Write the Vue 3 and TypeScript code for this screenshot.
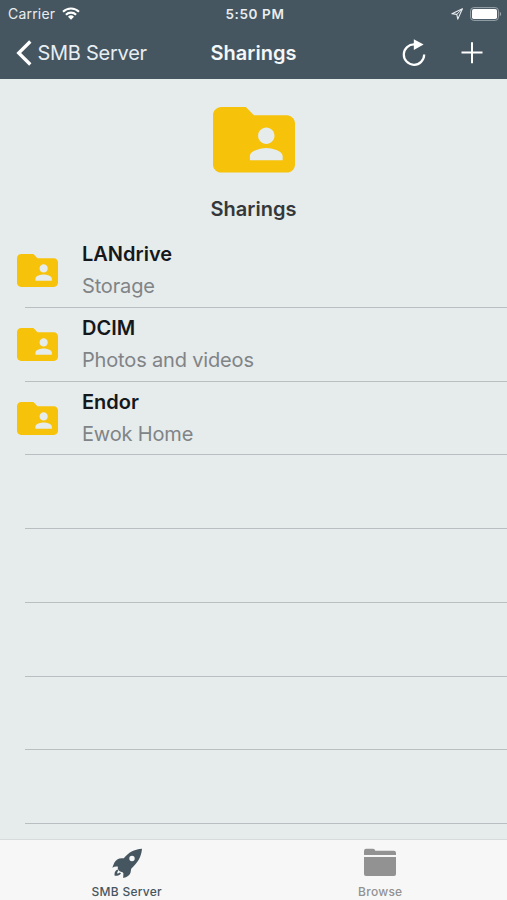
<script setup lang="ts">
interface Share {
  name: string
  detail: string
}

const shares: Share[] = [
  { name: 'LANdrive', detail: 'Storage' },
  { name: 'DCIM', detail: 'Photos and videos' },
  { name: 'Endor', detail: 'Ewok Home' },
]

const emptyRows = 5

const sharedFolder =
  'M20 6h-8l-2-2H4c-1.1 0-1.99.9-1.99 2L2 18c0 1.1.9 2 2 2h16c1.1 0 2-.9 2-2V8c0-1.1-.9-2-2-2zm-5 3c1.1 0 2 .9 2 2s-.9 2-2 2-2-.9-2-2 .9-2 2-2zm4 8h-8v-1c0-1.33 2.67-2 4-2s4 .67 4 2v1z'
</script>

<template>
  <div class="screen">
    <header class="top">
      <div class="status">
        <div class="status-left">
          <span class="carrier">Carrier</span>
          <svg class="wifi" viewBox="0 0 18 13" aria-hidden="true">
            <path d="M1 4.8a11.5 11.5 0 0 1 16 0M3.9 7.7a7.4 7.4 0 0 1 10.2 0" fill="none" stroke="currentColor" stroke-width="2.1" />
            <path d="M6 9.8a4.3 4.3 0 0 1 6 0L9 12.8z" fill="currentColor" />
          </svg>
        </div>
        <span class="time">5:50 PM</span>
        <div class="status-right">
          <svg class="location" viewBox="0 0 12 12" aria-hidden="true">
            <path d="M11.4.8L.9 5.7l4.9.7 1 4.7z" fill="none" stroke="currentColor" stroke-width="1.1" stroke-linejoin="round" />
            <path d="M11.4.8L5.8 6.4" stroke="currentColor" stroke-width="1" />
          </svg>
          <svg class="battery" viewBox="0 0 32 14" aria-hidden="true">
            <rect x=".6" y=".6" width="27.8" height="12.8" rx="3.2" fill="none" stroke="#9aa5ad" stroke-width="1" />
            <rect x="2" y="2" width="25" height="10" rx="1.8" fill="#fff" />
            <path d="M29.8 4.8c1.8.7 1.8 3.7 0 4.4z" fill="#9aa5ad" />
          </svg>
        </div>
      </div>
      <nav class="bar">
        <a class="back">
          <svg class="chevron" viewBox="0 0 16 26" aria-hidden="true">
            <path d="M14.300 1.500L2.700 13l11.600 11.500" fill="none" stroke="currentColor" stroke-width="3.300" />
          </svg>
          <span class="back-label">SMB Server</span>
        </a>
        <h1 class="title">Sharings</h1>
        <div class="actions">
          <svg class="refresh" viewBox="0 0 24 28" aria-hidden="true">
            <path d="M12.500 5.400A10.200 10.200 0 1 0 22.200 15.600" fill="none" stroke="currentColor" stroke-width="2.200" />
            <path d="M11.800.3v10.800L21.600 5.500z" fill="currentColor" />
          </svg>
          <svg class="plus" viewBox="0 0 22 22" aria-hidden="true">
            <path d="M11 .3v21M.5 10.500h21" fill="none" stroke="currentColor" stroke-width="2" />
          </svg>
        </div>
      </nav>
    </header>

    <main class="content">
      <section class="hero">
        <svg class="hero-icon" viewBox="2 4 20 16" aria-hidden="true"><path :d="sharedFolder" /></svg>
        <h2 class="hero-title">Sharings</h2>
      </section>
      <ul class="list">
        <li v-for="share in shares" :key="share.name" class="row">
          <svg class="row-icon" viewBox="2 4 20 16" aria-hidden="true"><path :d="sharedFolder" /></svg>
          <div class="row-text">
            <span class="name">{{ share.name }}</span>
            <span class="detail">{{ share.detail }}</span>
          </div>
        </li>
        <li v-for="n in emptyRows" :key="n" class="row"></li>
      </ul>
    </main>

    <footer class="tabs">
      <a class="tab active">
        <svg class="tab-icon" viewBox="0 0 32 32" aria-hidden="true">
          <path fill-rule="evenodd" d="M31 .7C23 1.400 17.500 4.300 12.800 10.300 8 9.600 5 11.500 3.300 14.800L1.300 19.800C3.200 18.600 5.200 18.200 7 18.800L6.700 20.500C7.200 22.400 9 23.800 11.600 24.200L12.400 25.200 12.200 29.900C16 29.300 18.800 27.400 19.500 24.800L20.200 20.800C26.500 14.800 30.400 9 31 .7zM21 7.800a2.700 2.700 0 1 1 0 5.400 2.700 2.700 0 0 1 0-5.400z" />
          <path d="M6.600 21.600C3.600 23 3.300 25.700 3.700 27.800c2.600.3 5-.5 6.300-2.500l-1.300-.7c-.7.7-1.500 1-2.400.9-.3-1.200.2-2.100 1.100-2.800z" />
        </svg>
        <span class="tab-label">SMB Server</span>
      </a>
      <a class="tab">
        <svg class="tab-icon" viewBox="0 0 32 32" aria-hidden="true">
          <path d="M0 7V3Q0 .8 2.200.8H9q1.800 0 2.300 2h18.500Q32 2.800 32 5v2z" />
          <path d="M0 9h32v17q0 2-2 2H2q-2 0-2-2z" />
        </svg>
        <span class="tab-label">Browse</span>
      </a>
    </footer>
  </div>
</template>

<style>
body {
  margin: 0;
}
</style>

<style scoped>
.screen {
  display: flex;
  flex-direction: column;
  width: 507px;
  height: 900px;
  overflow: hidden;
  background: #e6ebec;
  font-family: Inter, "Liberation Sans", sans-serif;
}
.top {
  flex: none;
  height: 79px;
  background: #465661;
  color: #fff;
}
.status {
  display: grid;
  grid-template-columns: 1fr auto 1fr;
  align-items: center;
  height: 27px;
  padding: 0 5px 0 8px;
  font-size: 13.5px;
  color: #e9edf0;
}
.status-left,
.status-right {
  display: flex;
  align-items: center;
}
.carrier {
  font-size: 14px;
  letter-spacing: 0.2px;
}
.wifi {
  width: 18px;
  height: 13px;
  margin-left: 7px;
  color: #fff;
}
.time {
  font-weight: 600;
  letter-spacing: 0.6px;
}
.status-right {
  justify-content: flex-end;
}
.location {
  width: 12px;
  height: 12px;
  margin-right: 7px;
}
.battery {
  width: 32px;
  height: 14px;
}
.bar {
  display: grid;
  grid-template-columns: 1fr auto 1fr;
  align-items: center;
  height: 52px;
  padding: 0 16px;
}
.back {
  display: flex;
  align-items: center;
}
.chevron {
  width: 16px;
  height: 26px;
}
.back-label {
  margin-left: 5.5px;
  font-size: 20px;
  letter-spacing: -0.27px;
  color: #e6eef3;
  white-space: nowrap;
}
.title {
  margin: 0;
  font-size: 20px;
  font-weight: 600;
  color: #f4f7f9;
}
.actions {
  display: flex;
  align-items: center;
  justify-content: flex-end;
  gap: 35px;
  padding-right: 8px;
}
.refresh {
  width: 24px;
  height: 28px;
}
.plus {
  width: 22px;
  height: 22px;
}
.content {
  flex: 1;
  min-height: 0;
  overflow: hidden;
}
.hero {
  display: flex;
  flex-direction: column;
  align-items: center;
  height: 155.4px;
  padding-top: 28.3px;
  box-sizing: border-box;
}
.hero-icon {
  width: 82px;
  height: 65.6px;
  fill: #f6c20a;
}
.hero-title {
  margin: 23px 0 0;
  font-size: 20px;
  line-height: 26px;
  font-weight: 600;
  color: #34383a;
}
.list {
  margin: 0;
  padding: 0;
  list-style: none;
}
.row {
  display: flex;
  height: 73.7px;
  padding-left: 17px;
  box-sizing: border-box;
  background: linear-gradient(#b9bfc1, #b9bfc1) 25px 100% / 100% 1px no-repeat;
}
.row-icon {
  width: 41px;
  height: 33px;
  margin-top: 20px;
  fill: #f6c20a;
}
.row-text {
  display: flex;
  flex-direction: column;
  margin-left: 24px;
  padding-top: 4px;
}
.name {
  font-size: 20px;
  line-height: 32px;
  font-weight: 600;
  color: #15181a;
}
.detail {
  font-size: 20px;
  line-height: 33px;
  letter-spacing: -0.16px;
  color: #808486;
}
.tabs {
  flex: none;
  display: grid;
  grid-template-columns: 1fr 1fr;
  height: 61px;
  box-sizing: border-box;
  border-top: 1px solid #d8dbdc;
  background: #f7f7f7;
}
.tab {
  display: flex;
  flex-direction: column;
  align-items: center;
  padding-top: 8px;
  color: #929292;
}
.tab.active {
  color: #465661;
}
.tab-icon {
  width: 32px;
  height: 32px;
  fill: currentColor;
}
.tab-label {
  margin-top: 4px;
  font-size: 12px;
  line-height: 16px;
  font-weight: 500;
  letter-spacing: 0.25px;
}
</style>
